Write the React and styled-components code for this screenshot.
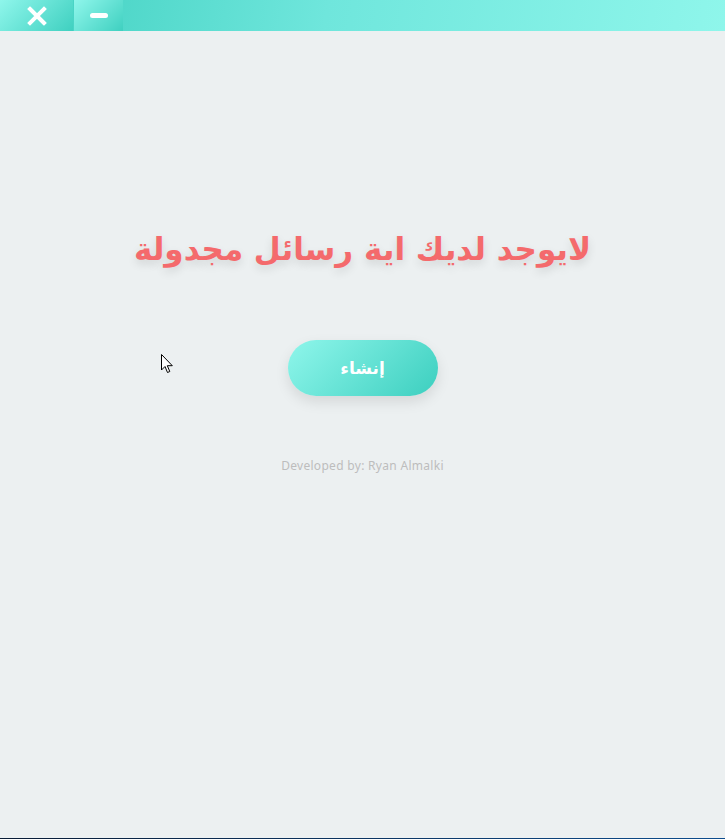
import React from "react";
import styled, { createGlobalStyle } from "styled-components";

const Global = createGlobalStyle`
  html, body { margin: 0; padding: 0; height: 100%; background: #ecf0f1; }
  #root { min-height: 100%; }
`;

const Page = styled.div`
  position: relative;
  width: 725px;
  height: 839px;
  background: #ecf0f1;
  display: flex;
  flex-direction: column;
  overflow: hidden;
  border-bottom: 1px solid #0b2a55;
  box-sizing: border-box;
  border-image: linear-gradient(90deg, #091c36, #0d4d8e) 1;
`;

const TitleBar = styled.div`
  height: 31px;
  display: flex;
  background: linear-gradient(100deg, #3ecfbf 0%, #6fe6dc 45%, #8ff6eb 100%);
`;

const WinButton = styled.button`
  width: ${(p) => p.$w}px;
  height: 31px;
  border: none;
  padding: 0;
  margin-right: 1px;
  display: flex;
  align-items: center;
  justify-content: center;
  background: linear-gradient(135deg, #8ff6eb 0%, #3fd0c0 100%);
  cursor: pointer;
`;

const Main = styled.main`
  flex: 1;
  display: flex;
  flex-direction: column;
  align-items: center;
  padding-top: 198px;
`;

const Title = styled.h1`
  margin: 0;
  font-family: "DejaVu Sans", sans-serif;
  font-weight: bold;
  font-size: 31px;
  line-height: 40px;
  color: #f46a6c;
  direction: rtl;
  text-shadow: 0 4px 10px rgba(0, 0, 0, 0.12);
`;

const CreateButton = styled.button`
  margin-top: 71px;
  width: 150px;
  height: 56px;
  border: none;
  border-radius: 28px;
  background: linear-gradient(135deg, #8ff6eb 0%, #3ccfbf 100%);
  box-shadow: 0 6px 14px rgba(0, 0, 0, 0.1);
  color: #fff;
  font-family: "DejaVu Sans", sans-serif;
  font-weight: bold;
  font-size: 17px;
  direction: rtl;
  cursor: pointer;
`;

const Credit = styled.p`
  margin: 62px 0 0;
  font-family: "Noto Sans", sans-serif;
  font-size: 12px;
  line-height: 16px;
  letter-spacing: 0.3px;
  color: #bdbdbd;
`;

const Cursor = styled.svg`
  position: absolute;
  left: 161px;
  top: 354px;
`;

export default function App() {
  return (
    <>
      <Global />
      <Page>
        <TitleBar>
          <WinButton $w={73} aria-label="close">
            <svg width="20" height="20" viewBox="0 0 20 20">
              <path d="M3 3 L17 17 M17 3 L3 17" stroke="#fff" strokeWidth="4" strokeLinecap="square" />
            </svg>
          </WinButton>
          <WinButton $w={49} aria-label="minimize">
            <svg width="20" height="8" viewBox="0 0 20 8">
              <rect x="1" y="1" width="18" height="5" rx="2.5" fill="#fff" />
            </svg>
          </WinButton>
        </TitleBar>
        <Main>
          <Title>لايوجد لديك اية رسائل مجدولة</Title>
          <CreateButton>إنشاء</CreateButton>
          <Credit>Developed by: Ryan Almalki</Credit>
        </Main>
        <Cursor width="13" height="20" viewBox="0 0 13 20">
          <path d="M0.5 0.5 L0.5 16 L4 12.5 L6.5 18.5 L8.8 17.5 L6.3 11.7 L11.3 11.7 Z" fill="#fff" stroke="#000" strokeWidth="1" />
        </Cursor>
      </Page>
    </>
  );
}
